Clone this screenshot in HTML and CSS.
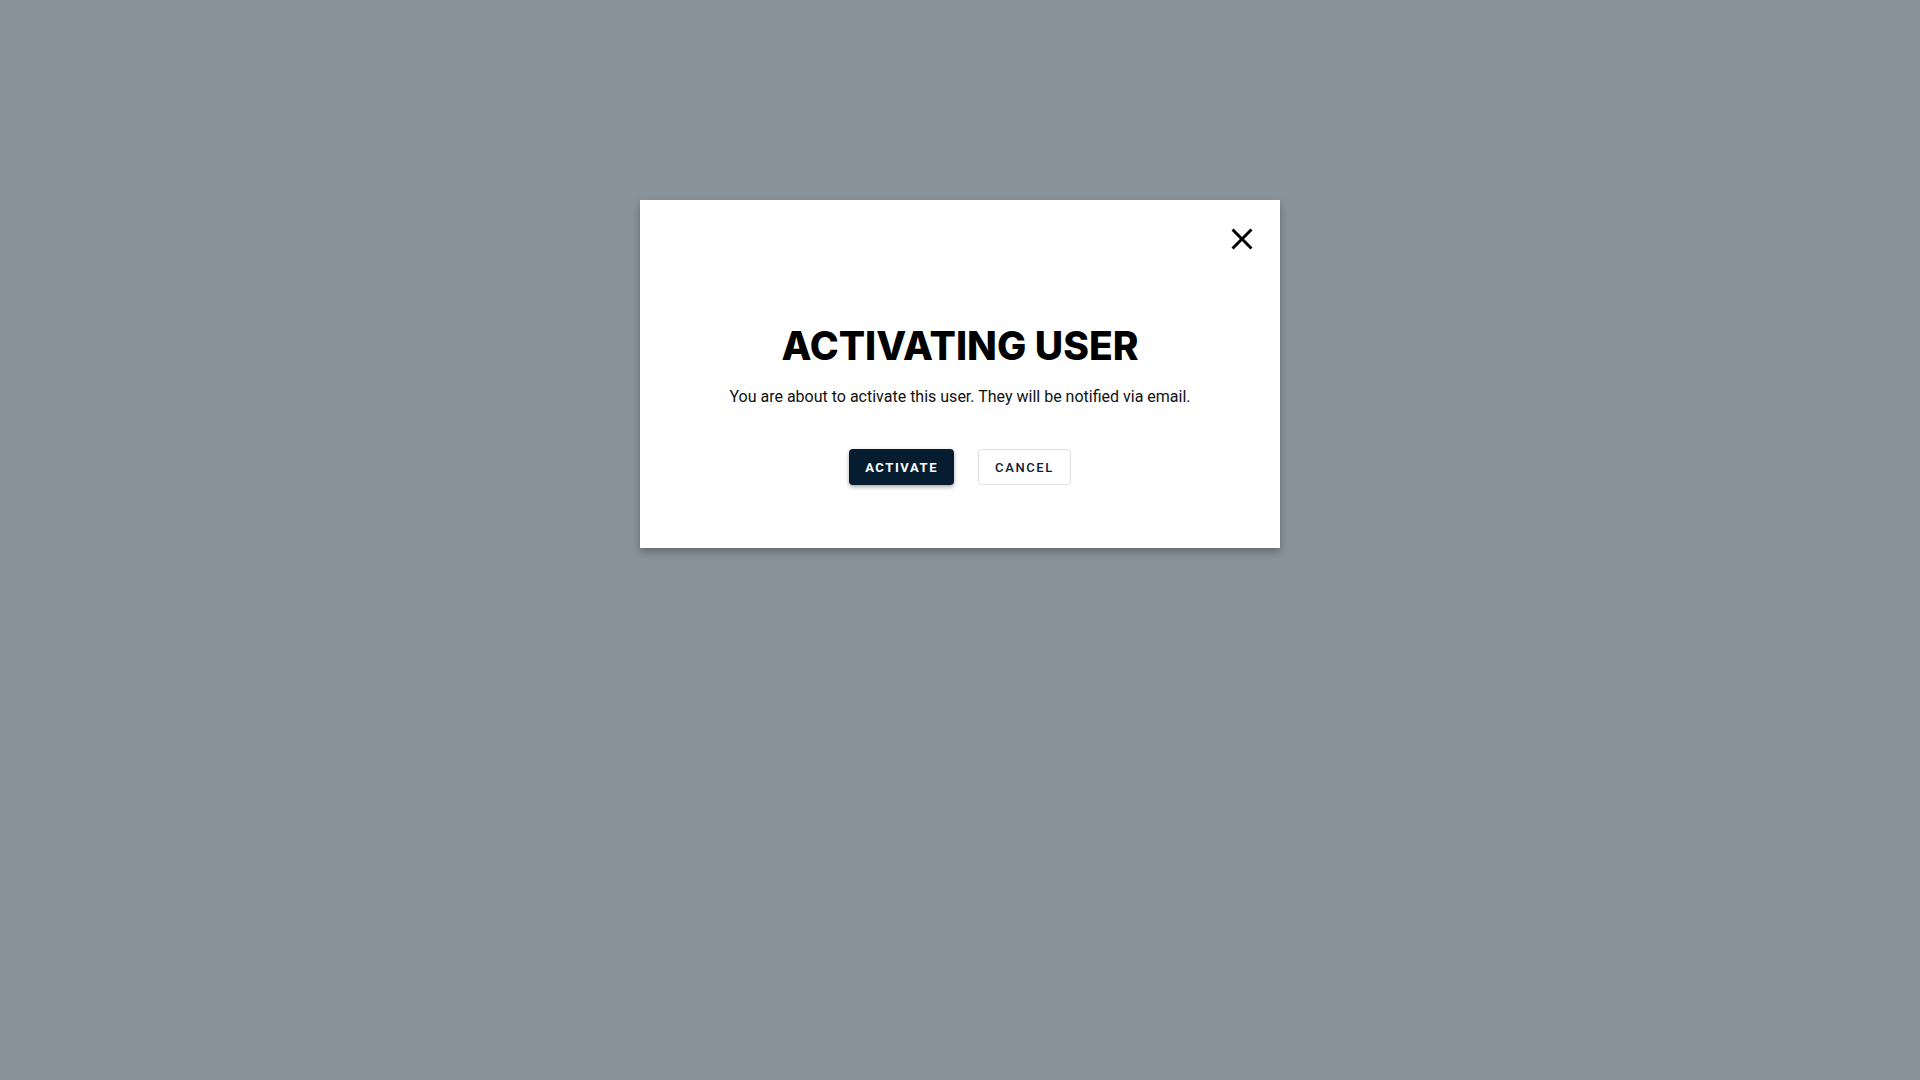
FILE: index.html
```html
<!DOCTYPE html>
<html lang="en">
<head>
<meta charset="utf-8">
<title>Activating user</title>
<link rel="stylesheet" href="styles.css">
</head>
<body>
<div class="backdrop">
  <div class="modal" role="dialog" aria-labelledby="modal-title">
    <button class="close" aria-label="Close">
      <svg viewBox="0 0 24 24" width="36" height="36" aria-hidden="true"><path d="M19 6.41L17.59 5 12 10.59 6.41 5 5 6.41 10.59 12 5 17.59 6.41 19 12 13.41 17.59 19 19 17.59 13.41 12z" fill="#000"/></svg>
    </button>
    <h1 class="title" id="modal-title">ACTIVATING USER</h1>
    <p class="message">You are about to activate this user. They will be notified via email.</p>
    <div class="actions">
      <button class="btn btn-primary">ACTIVATE</button>
      <button class="btn btn-secondary">CANCEL</button>
    </div>
  </div>
</div>
</body>
</html>
```
FILE: styles.css
```css
html, body {
  margin: 0;
  padding: 0;
  height: 100%;
}
body {
  background: #89939b;
  font-family: Roboto, "Liberation Sans", sans-serif;
}
.backdrop {
  min-height: 100%;
  display: flex;
  justify-content: center;
  align-items: flex-start;
  padding-top: 200px;
  box-sizing: border-box;
}
.modal {
  position: relative;
  width: 640px;
  box-sizing: border-box;
  background: #fff;
  padding: 123px 40px 63px;
  box-shadow: 0 4px 8px rgba(0, 0, 0, 0.28);
  display: flex;
  flex-direction: column;
  align-items: center;
  text-align: center;
}
.close {
  position: absolute;
  top: 21px;
  right: 20px;
  width: 36px;
  height: 36px;
  padding: 0;
  border: 0;
  background: transparent;
  cursor: pointer;
  display: flex;
}
.title {
  margin: 0 0 17px;
  font-family: Inter, "Open Sans", sans-serif;
  font-weight: 800;
  font-size: 39px;
  line-height: 45px;
  color: #000;
  letter-spacing: 0;
}
.message {
  margin: 0;
  font-size: 16px;
  line-height: 24px;
  color: #111;
}
.actions {
  margin-top: 40px;
  display: flex;
  gap: 24px;
}
.btn {
  height: 36px;
  padding: 0 16px;
  font-family: Roboto, "Liberation Sans", sans-serif;
  font-size: 13px;
  letter-spacing: 1.6px;
  border-radius: 4px;
  cursor: pointer;
}
.btn-primary {
  background: #061c30;
  color: #fff;
  border: 0;
  font-weight: 700;
  box-shadow: 0 2px 4px rgba(0, 0, 0, 0.35);
}
.btn-secondary {
  background: #fff;
  color: #0b2033;
  font-weight: 500;
  border: 1px solid #dfe2e5;
}
```
